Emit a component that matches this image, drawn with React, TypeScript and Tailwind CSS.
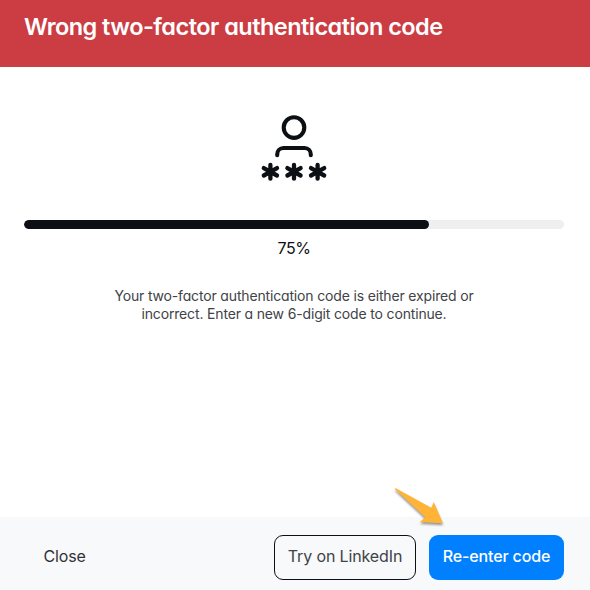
const asterisks = [270.4, 294, 317.6];

function UserCodeIcon() {
  return (
    <svg className="block h-[66px] w-[68px]" viewBox="260 115 68 66" fill="none" stroke="#0c1014" strokeWidth="4.1" strokeLinecap="round" aria-hidden="true">
      <circle cx="294" cy="127.6" r="10.3" />
      <path d="M277.2 155.2v-.7c0-3.6 2.6-6.5 6.3-6.5h21c3.7 0 6.3 2.9 6.3 6.5v.7" />
      {asterisks.map((x) => (
        <path key={x} strokeWidth="4.3" d={`M${x} 164.9v13.8M${x - 6.6} 168.1l13.2 7.4M${x + 6.6} 168.1l-13.2 7.4`} />
      ))}
    </svg>
  );
}

function PointerArrow() {
  return (
    <svg className="pointer-events-none absolute top-[484px] left-[391px] h-[46px] w-[58px] [filter:drop-shadow(0_2px_1px_#00000066)]" viewBox="391 484 58 46" aria-hidden="true">
      <path d="M395.4 488 431.4 507.8 433.8 502 443 523.2 420 522 425.2 517.2 395 489.2Z" fill="#ffb438" />
    </svg>
  );
}

export default function App() {
  return (
    <div className="relative flex h-[590px] w-[590px] flex-col overflow-hidden bg-white font-['Inter',sans-serif] text-[#0c1014] [font-feature-settings:'cv11']">
      <header className="h-[67px] bg-[#cb3d43] px-6 pt-[11px]">
        <h1 className="text-[23.5px] leading-8 font-semibold tracking-[-0.53px] whitespace-nowrap text-white">Wrong two-factor authentication code</h1>
      </header>
      <main className="flex flex-1 flex-col items-center pr-[26px] pl-6 pt-12">
        <UserCodeIcon />
        <div className="mt-[39px] h-[9px] w-full overflow-hidden rounded-full bg-[#efefef]">
          <div className="h-full w-3/4 rounded-full bg-[#0c1014]" />
        </div>
        <p className="mt-[7px] text-base leading-6 tracking-[-0.5px]">75%</p>
        <p className="mt-[27px] text-center text-sm leading-[18px] tracking-[-0.16px] whitespace-nowrap text-[#404347]">
          Your two-factor authentication code is either expired or
          <br />
          incorrect. Enter a new 6-digit code to continue.
        </p>
      </main>
      <footer className="flex h-[73px] items-start bg-[#f8f9fb] pt-[18px] pr-[26px] pl-[43.5px]">
        <button className="h-[45px] pb-[3px] text-base leading-6 tracking-[-0.15px] text-[#303236]">Close</button>
        <button className="ml-auto h-[45px] w-[142px] rounded-[9px] border border-[#0c1014] pb-[3px] text-base leading-6 tracking-[-0.13px] whitespace-nowrap text-[#404347]">Try on LinkedIn</button>
        <button className="ml-[13px] h-[45px] w-[135px] rounded-[9px] bg-[#0080ff] pb-[3px] text-base leading-6 font-medium tracking-[-0.15px] whitespace-nowrap text-white">Re-enter code</button>
      </footer>
      <PointerArrow />
    </div>
  );
}
